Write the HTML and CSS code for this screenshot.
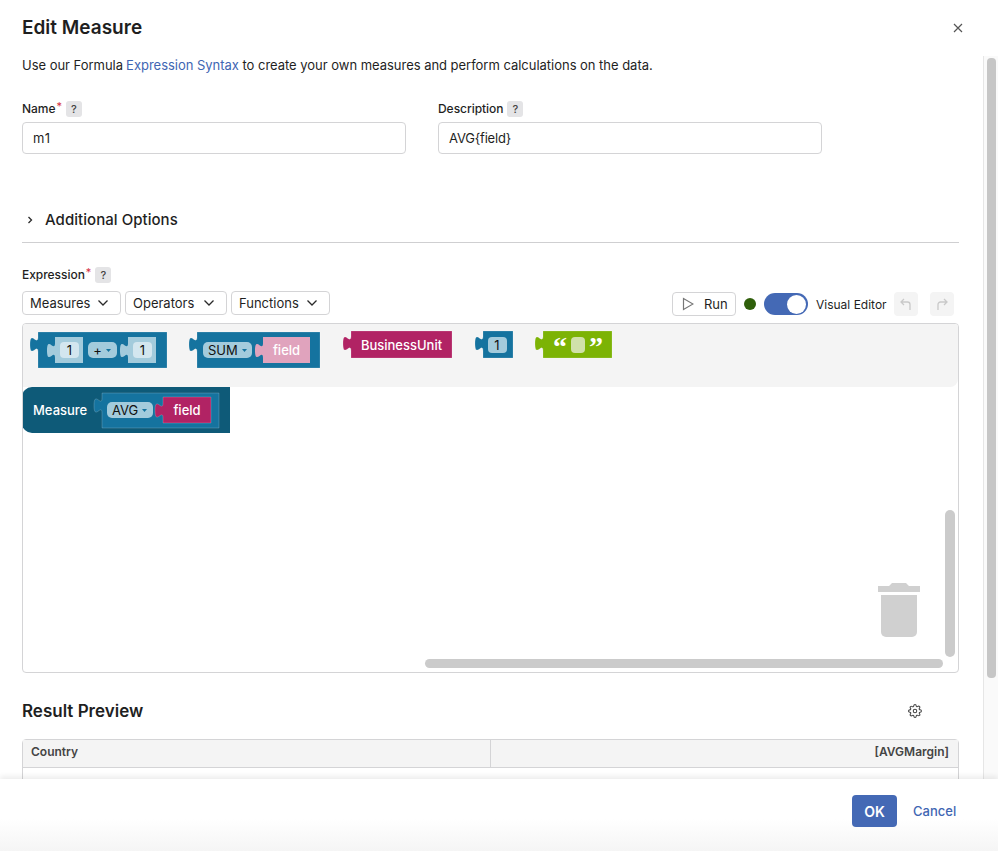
FILE: index.html
```html
<!DOCTYPE html>
<html lang="en">
<head>
<meta charset="utf-8">
<title>Edit Measure</title>
<link rel="stylesheet" href="styles.css">
</head>
<body>
<div class="modal">
  <header class="modal-head">
    <h1 class="modal-title">Edit Measure</h1>
    <button class="close" aria-label="Close">
      <svg width="10" height="10" viewBox="0 0 10 10"><path d="M1 1l8 8M9 1l-8 8" class="close-x"/></svg>
    </button>
  </header>
  <main class="modal-body">
    <p class="intro">Use our Formula <a class="link">Expression Syntax</a> to create your own measures and perform calculations on the data.</p>
    <div class="fields">
      <div class="field">
        <div class="label-row"><span class="label">Name</span><span class="req">*</span><span class="help">?</span></div>
        <div class="input input-name">m1</div>
      </div>
      <div class="field">
        <div class="label-row"><span class="label">Description</span><span class="help">?</span></div>
        <div class="input input-desc">AVG{field}</div>
      </div>
    </div>
    <div class="options">
      <svg class="opt-chev" width="8" height="10" viewBox="0 0 8 10"><path d="M2.500 2l3 3-3 3" class="stroke-dark"/></svg>
      <span class="options-title">Additional Options</span>
    </div>
    <div class="label-row expr-label"><span class="label">Expression</span><span class="req">*</span><span class="help">?</span></div>
    <div class="toolbar">
      <div class="menus">
        <div class="menu menu-m">Measures<svg width="12" height="8" viewBox="0 0 12 8"><path d="M1.500 1.500L6 6l4.500-4.500" class="stroke-dark"/></svg></div>
        <div class="menu menu-o">Operators<svg width="12" height="8" viewBox="0 0 12 8"><path d="M1.500 1.500L6 6l4.500-4.500" class="stroke-dark"/></svg></div>
        <div class="menu menu-f">Functions<svg width="12" height="8" viewBox="0 0 12 8"><path d="M1.500 1.500L6 6l4.500-4.500" class="stroke-dark"/></svg></div>
      </div>
      <div class="tools">
        <div class="run">
          <svg width="12" height="14" viewBox="0 0 12 14"><path d="M1.500 1.500v11l9.500-5.500z" class="stroke-grey"/></svg>
          <span>Run</span>
        </div>
        <span class="dot"></span>
        <span class="toggle"><span class="knob"></span></span>
        <span class="toggle-label">Visual Editor</span>
        <span class="hist hist-undo"><svg width="14" height="14" viewBox="0 0 14 14"><path d="M5 2L2 5l3 3M2 5h6.500a2.500 2.500 0 0 1 2.500 2.500V13" class="stroke-light"/></svg></span>
        <span class="hist"><svg width="14" height="14" viewBox="0 0 14 14"><path d="M9 2l3 3-3 3M12 5H5.500A2.500 2.500 0 0 0 3 7.500V13" class="stroke-light"/></svg></span>
      </div>
    </div>
    <div class="workspace">
      <div class="flyout"></div>
      <svg class="blocks" width="935" height="348" viewBox="23 324 935 348">
        <!-- 1 + 1 -->
        <path class="b-blue" d="M38 332H167V368H38V352c0,-10 -8,8 -8,-7.500s8,2.500 8,-7.500z"/>
        <path class="b-light" d="M55 337H83V363H55V358c0,-10 -8,8 -8,-7.500s8,2.500 8,-7.500z"/>
        <rect class="b-pale" x="60" y="342" width="19" height="16" rx="4"/>
        <text class="t-dark" x="69.500" y="355" text-anchor="middle">1</text>
        <rect class="b-light" x="88" y="342" width="29" height="16" rx="5"/>
        <text class="t-dark" x="97.500" y="355" text-anchor="middle">+</text>
        <path class="b-arrow" d="M106 349h5l-2.500 3z"/>
        <path class="b-light" d="M128 337H156V363H128V358c0,-10 -8,8 -8,-7.500s8,2.500 8,-7.500z"/>
        <rect class="b-pale" x="133" y="342" width="19" height="16" rx="4"/>
        <text class="t-dark" x="142.500" y="355" text-anchor="middle">1</text>
        <!-- SUM field -->
        <path class="b-blue" d="M197 332H320V368H197V352c0,-10 -8,8 -8,-7.500s8,2.500 8,-7.500z"/>
        <rect class="b-light" x="203" y="342" width="49" height="16" rx="5"/>
        <text class="t-dark" x="208" y="355">SUM</text>
        <path class="b-arrow" d="M242 349h5l-2.500 3z"/>
        <path class="b-pink-l" d="M263 337H310V363H263V358c0,-10 -8,8 -8,-7.500s8,2.500 8,-7.500z"/>
        <text class="t-white" x="286.500" y="355" text-anchor="middle">field</text>
        <!-- BusinessUnit -->
        <path class="b-pink" d="M351 331H452V358H351V351c0,-10 -8,8 -8,-7.500s8,2.500 8,-7.500z"/>
        <text class="t-white" x="401.500" y="350" text-anchor="middle">BusinessUnit</text>
        <!-- 1 -->
        <path class="b-blue" d="M483 331H513V358H483V351c0,-10 -8,8 -8,-7.500s8,2.500 8,-7.500z"/>
        <rect class="b-light" x="488" y="337" width="19" height="16" rx="4"/>
        <text class="t-dark" x="497" y="350" text-anchor="middle">1</text>
        <!-- text -->
        <path class="b-green" d="M543 331H612V358H543V351c0,-10 -8,8 -8,-7.500s8,2.500 8,-7.500z"/>
        <rect class="b-green-l" x="571" y="337" width="14" height="16" rx="4"/>
        <text class="t-quote" x="553" y="356">“</text>
        <text class="t-quote" x="589" y="356">”</text>
        <!-- Measure -->
        <path class="b-dark" d="M32 387H230V433H32A10 10 0 0 1 22 423V397A10 10 0 0 1 32 387z"/>
        <text class="t-white" x="33" y="415">Measure</text>
        <path class="b-blue" d="M102 393H219V428H102V413c0,-10 -8,8 -8,-7.500s8,2.500 8,-7.500z"/>
        <rect class="b-light" x="107" y="402" width="46" height="16" rx="5"/>
        <text class="t-dark" x="112" y="415">AVG</text>
        <path class="b-arrow" d="M142 409h5l-2.500 3z"/>
        <path class="b-pink" d="M163 397H211V423H163V418c0,-10 -8,8 -8,-7.500s8,2.500 8,-7.500z"/>
        <text class="t-white" x="187" y="415" text-anchor="middle">field</text>
        <!-- trash -->
        <path class="b-trash" d="M881 595H917V632a5 5 0 0 1-5 5H886a5 5 0 0 1-5-5z"/>
        <path class="b-trash" d="M878 592V586H889L892 583H906L909 586H920V592z"/>
      </svg>
      <span class="ws-scroll-v"></span>
      <span class="ws-scroll-h"></span>
    </div>
    <div class="preview-head">
      <h2 class="preview-title">Result Preview</h2>
      <svg class="gear" width="14" height="14" viewBox="0 0 24 24"><circle class="stroke-gear" cx="12" cy="12" r="3"/><path class="stroke-gear" d="M19.4 15a1.650 1.650 0 0 0 .33 1.820l.06.06a2 2 0 0 1 0 2.830 2 2 0 0 1-2.830 0l-.06-.06a1.650 1.650 0 0 0-1.820-.33 1.650 1.650 0 0 0-1 1.510V21a2 2 0 0 1-2 2 2 2 0 0 1-2-2v-.09A1.650 1.650 0 0 0 9 19.400a1.650 1.650 0 0 0-1.820.33l-.06.06a2 2 0 0 1-2.830 0 2 2 0 0 1 0-2.830l.06-.06a1.650 1.650 0 0 0 .33-1.820 1.650 1.650 0 0 0-1.510-1H3a2 2 0 0 1-2-2 2 2 0 0 1 2-2h.09A1.650 1.650 0 0 0 4.600 9a1.650 1.650 0 0 0-.33-1.820l-.06-.06a2 2 0 0 1 0-2.830 2 2 0 0 1 2.830 0l.06.06a1.650 1.650 0 0 0 1.820.33H9a1.650 1.650 0 0 0 1-1.510V3a2 2 0 0 1 2-2 2 2 0 0 1 2 2v.09a1.650 1.650 0 0 0 1 1.510 1.650 1.650 0 0 0 1.820-.33l.06-.06a2 2 0 0 1 2.830 0 2 2 0 0 1 0 2.830l-.06.06a1.650 1.650 0 0 0-.33 1.820V9a1.650 1.650 0 0 0 1.510 1H21a2 2 0 0 1 2 2 2 2 0 0 1-2 2h-.09a1.650 1.650 0 0 0-1.510 1z"/></svg>
    </div>
    <div class="table">
      <div class="t-head">
        <div class="th th-left">Country</div>
        <div class="th th-right">[AVGMargin]</div>
      </div>
      <div class="t-row"></div>
    </div>
  </main>
  <span class="page-track"><span class="page-thumb"></span></span>
  <footer class="modal-foot">
    <button class="ok">OK</button>
    <a class="cancel">Cancel</a>
  </footer>
</div>
</body>
</html>
```
FILE: styles.css
```css
* { box-sizing: border-box; }
html, body { margin: 0; height: 100%; }
body { font-family: Inter, "Liberation Sans", sans-serif; color: #1f1f1f; background: #fff; overflow: hidden; }
.modal { position: relative; height: 851px; display: flex; flex-direction: column; overflow: hidden; background: #fff; }
.modal-head { display: flex; justify-content: space-between; align-items: center; height: 55px; padding: 0 35px 0 22px; flex: none; }
.modal-title { margin: 0; font-size: 19px; line-height: 26px; font-weight: 600; }
.close { width: 10px; height: 10px; padding: 0; border: 0; background: none; display: flex; }
.close-x { stroke: #555; stroke-width: 1.2; fill: none; }
.modal-body { flex: 1; min-height: 0; overflow: hidden; padding: 0 39px 0 22px; }
.intro { margin: 0; font-size: 13px; line-height: 20px; letter-spacing: -.02px; word-spacing: -.04px; }
.link { color: #3f66b3; margin-left: -.5px; }
.fields { display: flex; gap: 32px; margin-top: 26px; }
.field { width: 384px; }
.label-row { display: flex; align-items: center; height: 16px; }
.label { font-size: 12px; line-height: 16px; font-weight: 500; letter-spacing: -.04px; }
.req { color: #d32f3f; font-size: 11px; line-height: 16px; margin-left: 1px; position: relative; top: -3px; }
.help { width: 16px; height: 16px; margin-left: 4px; border-radius: 3px; background: #e4e4e6; color: #444; font-size: 11px; line-height: 16px; text-align: center; font-weight: 500; }
.input { height: 32px; margin-top: 5px; border: 1px solid #d4d4d6; border-radius: 4px; padding: 0 10px; font-size: 13px; line-height: 30px; }
.input-name { letter-spacing: .8px; }
.input-desc { letter-spacing: -.2px; }
.options { display: flex; align-items: center; height: 43px; margin-top: 46px; padding: 0 0 3px 4px; border-bottom: 1px solid #cfcfd1; }
.opt-chev { margin-right: 11px; }
.options-title { font-size: 15px; font-weight: 500; line-height: 20px; letter-spacing: .05px; }
.stroke-dark { fill: none; stroke: #2a2a2a; stroke-width: 1.3; }
.stroke-grey { fill: none; stroke: #777; stroke-width: 1.2; }
.stroke-light { fill: none; stroke: #c9c9c9; stroke-width: 1.3; }
.stroke-gear { fill: none; stroke: #444; stroke-width: 1.8; }
.expr-label { margin-top: 24px; }
.toolbar { display: flex; justify-content: space-between; align-items: flex-start; margin-top: 8px; padding-right: 5px; }
.menus { display: flex; gap: 4px; }
.menu { display: flex; align-items: center; justify-content: space-between; height: 24px; padding: 0 11px 0 7px; border: 1px solid #d4d4d6; border-radius: 4px; font-size: 13px; }
.menu-m { width: 99px; }
.menu-o { width: 102px; }
.menu-f { width: 99px; }
.tools { display: flex; align-items: center; height: 24px; margin-top: 1px; font-size: 12px; }
.run { display: flex; align-items: center; gap: 10px; width: 64px; height: 24px; padding-left: 9px; border: 1px solid #d4d4d6; border-radius: 4px; font-size: 13px; }
.dot { width: 12px; height: 12px; margin-left: 8px; border-radius: 50%; background: #2f5f0b; }
.toggle { display: flex; justify-content: flex-end; align-items: center; width: 44px; height: 22px; margin-left: 8px; padding-right: 2px; border-radius: 11px; background: #4469b5; }
.knob { width: 19px; height: 19px; border-radius: 50%; background: #fff; }
.toggle-label { margin-left: 8px; width: 71px; white-space: nowrap; }
.hist { display: flex; align-items: center; justify-content: center; width: 24px; height: 24px; margin-left: 12px; border-radius: 4px; background: #f4f4f4; }
.hist-undo { margin-left: 7px; }
.workspace { position: relative; height: 350px; margin-top: 7px; border: 1px solid #d4d4d6; border-radius: 4px; overflow: hidden; }
.flyout { height: 63px; background: #f4f4f4; border-bottom-right-radius: 8px; }
.blocks { position: absolute; left: 0; top: 0; overflow: hidden; font-family: Inter, "Liberation Sans", sans-serif; font-size: 13px; }
.b-blue { fill: #15739f; stroke: rgba(255,255,255,.18); }
.b-dark { fill: #0e5a78; }
.b-light { fill: #a3cbdc; }
.b-pale { fill: #d3e6ef; }
.b-arrow { fill: #15739f; }
.b-pink { fill: #b12364; stroke: rgba(255,255,255,.18); }
.b-pink-l { fill: #e0a3bd; }
.b-green { fill: #7cb305; stroke: rgba(255,255,255,.18); }
.b-green-l { fill: #d0e1a9; }
.b-trash { fill: #d0d0d0; }
.t-dark { fill: #111; }
.t-white { fill: #fff; font-weight: 500; }
.t-quote { fill: #fff; font-family: "Liberation Serif", serif; font-size: 28px; font-weight: 700; }
.ws-scroll-v { position: absolute; left: 922px; top: 186px; width: 10px; height: 147px; border-radius: 5px; background: #cbcbcb; }
.ws-scroll-h { position: absolute; left: 402px; top: 335px; width: 518px; height: 9px; border-radius: 5px; background: #cbcbcb; }
.preview-head { display: flex; justify-content: space-between; align-items: center; height: 24px; margin-top: 26px; padding-right: 37px; }
.preview-title { margin: 0; font-size: 17px; line-height: 24px; font-weight: 600; }
.table { margin-top: 16px; border: 1px solid #d4d4d6; border-radius: 4px 4px 0 0; }
.t-head { display: flex; height: 28px; background: #f4f4f4; border-bottom: 1px solid #d4d4d6; }
.th { font-size: 12px; line-height: 23px; font-weight: 600; color: #444; padding: 0 9px 0 8px; }
.th-left { width: 468px; border-right: 1px solid #d4d4d6; }
.th-right { flex: 1; text-align: right; }
.t-row { height: 40px; }
.gear { flex: none; }
.page-track { position: absolute; left: 983px; top: 56px; width: 15px; height: 723px; background: #fafafa; border-left: 1px solid #e6e6e6; }
.page-thumb { display: block; margin: 2px 0 0 3px; width: 9px; height: 620px; border-radius: 4px; background: #c6c6c6; }
.modal-foot { position: relative; flex: none; display: flex; justify-content: flex-end; align-items: flex-start; gap: 16px; height: 72px; padding: 16px 41px 0 0; background: linear-gradient(#fff 55%, #f5f5f5); box-shadow: 0 -3px 5px rgba(0,0,0,.07); }
.ok { width: 45px; height: 32px; border: 0; border-radius: 4px; background: #4469b5; color: #fff; font: 600 14px Inter, "Liberation Sans", sans-serif; }
.cancel { width: 44px; color: #3f66b3; font-size: 13px; font-weight: 500; line-height: 32px; white-space: nowrap; }
```
